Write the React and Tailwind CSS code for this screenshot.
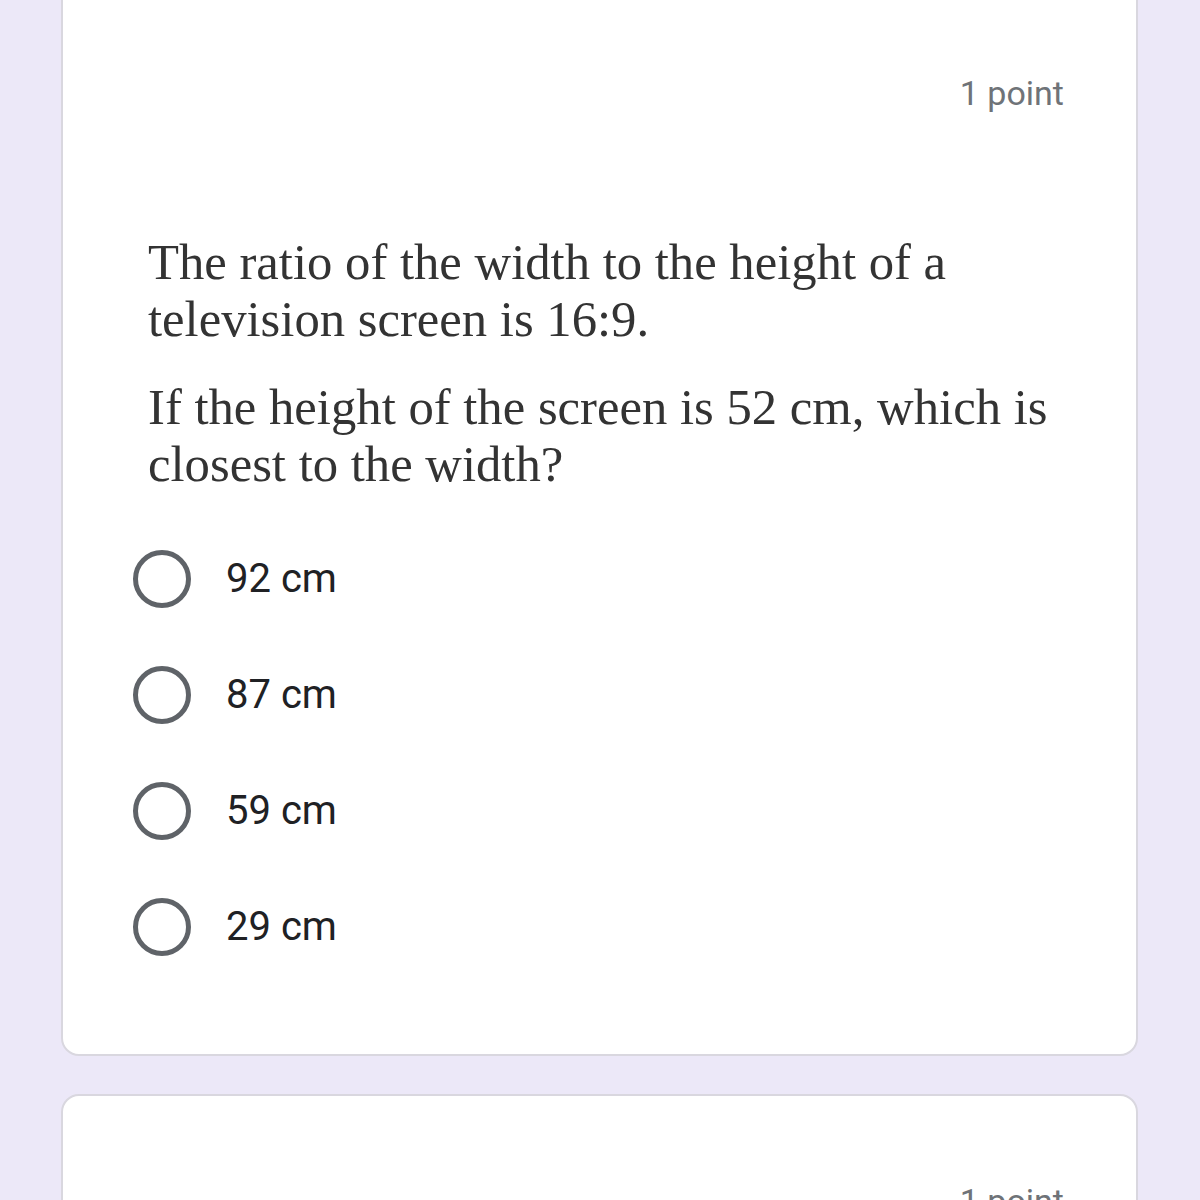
import React from "react";

function Radio({ label }) {
  return (
    <div className="flex items-center h-[116px]">
      <div className="w-[58px] h-[58px] rounded-full border-[5px] border-[#5f6368] shrink-0" />
      <div
        className="ml-[35px] text-[40px] text-[#202124] leading-none"
        style={{ fontFamily: "Roboto, 'Noto Sans', sans-serif" }}
      >
        {label}
      </div>
    </div>
  );
}

export default function App() {
  return (
    <div className="w-[1200px] h-[1200px] overflow-hidden bg-[#ece8f8]">
      <div className="ml-[61px] w-[1077px] -mt-[20px] bg-white rounded-[18px] border-2 border-[#d9d7df] px-[70px]">
        <div
          className="flex justify-end pt-[94px] pr-[2px] text-[34px] text-[#6f7378] leading-none"
          style={{ fontFamily: "Roboto, 'Noto Sans', sans-serif" }}
        >
          1 point
        </div>
        <div
          className="pl-[15px] pt-[124px] text-[50.7px] text-[#333333] leading-[57px]"
          style={{ fontFamily: "'Liberation Serif', 'Times New Roman', serif" }}
        >
          <p>The ratio of the width to the height of a<br />television screen is 16:9.</p>
          <p className="mt-[31px]">If the height of the screen is 52 cm, which is<br />closest to the width?</p>
        </div>
        <div className="pt-[28px] pb-[69px]">
          <Radio label="92 cm" />
          <Radio label="87 cm" />
          <Radio label="59 cm" />
          <Radio label="29 cm" />
        </div>
      </div>
      <div className="ml-[61px] w-[1077px] mt-[38px] bg-white rounded-[18px] border-2 border-[#d9d7df] px-[70px] h-[200px]">
        <div
          className="flex justify-end pt-[88px] pr-[2px] text-[34px] text-[#6f7378] leading-none"
          style={{ fontFamily: "Roboto, 'Noto Sans', sans-serif" }}
        >
          1 point
        </div>
      </div>
    </div>
  );
}
